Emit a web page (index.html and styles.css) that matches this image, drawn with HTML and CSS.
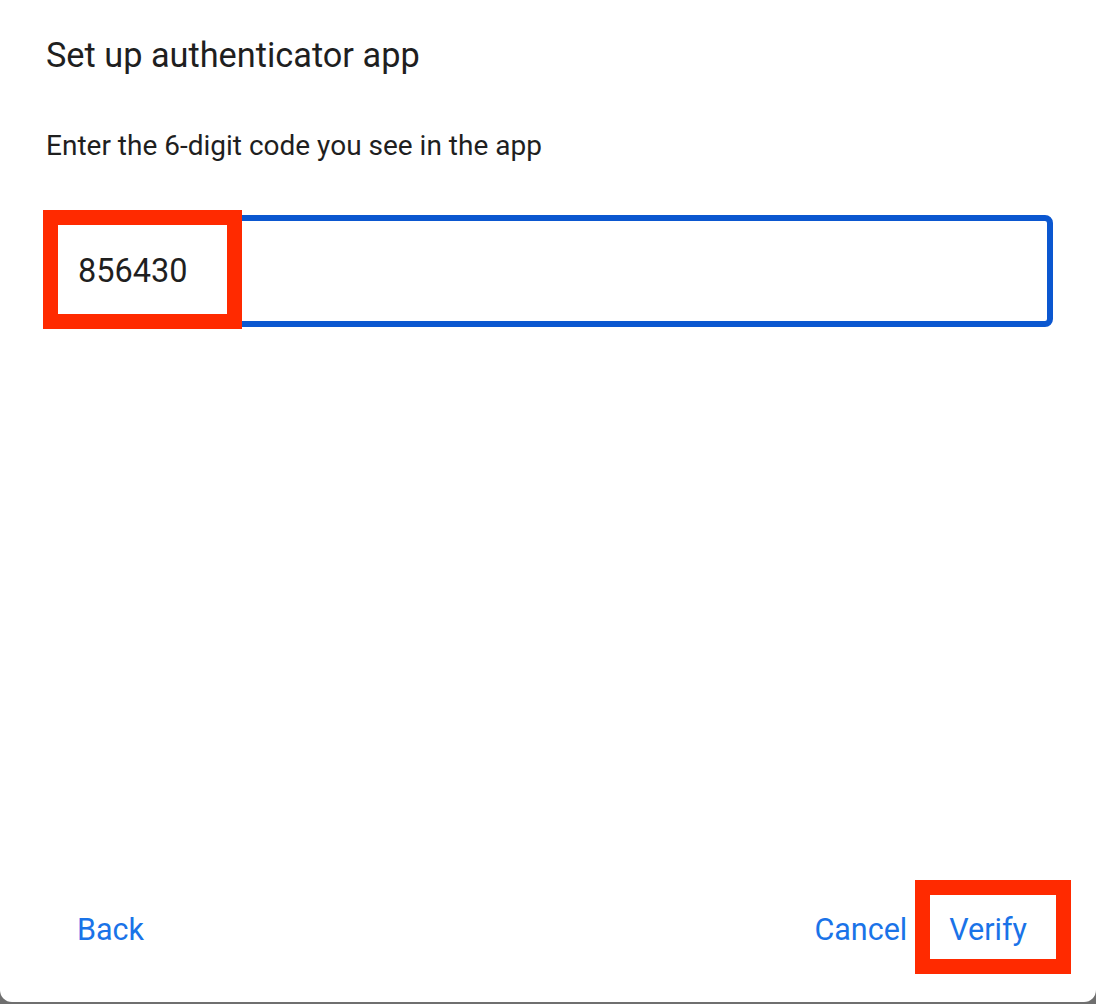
FILE: index.html
```html
<!DOCTYPE html>
<html lang="en">
<head>
<meta charset="utf-8">
<title>Set up authenticator app</title>
<link rel="stylesheet" href="styles.css">
</head>
<body>
<div class="dialog">
  <h1 class="title">Set up authenticator app</h1>
  <p class="subtitle">Enter the 6-digit code you see in the app</p>
  <div class="field">
    <div class="input">856430</div>
    <div class="mark mark-input"></div>
  </div>
  <div class="spacer"></div>
  <div class="footer">
    <button class="btn btn-back">Back</button>
    <div class="right">
      <button class="btn btn-cancel">Cancel</button>
      <div class="verify-wrap">
        <button class="btn btn-verify">Verify</button>
        <div class="mark mark-verify"></div>
      </div>
    </div>
  </div>
</div>
</body>
</html>
```
FILE: styles.css
```css
html, body {
  margin: 0;
  padding: 0;
  background: #6f6f6f;
  height: 1004px;
  overflow: hidden;
}
.dialog {
  box-sizing: border-box;
  width: 1096px;
  height: 1002px;
  background: #ffffff;
  border-radius: 0 0 12px 12px;
  display: flex;
  flex-direction: column;
  padding: 0 43px 0 46px;
  font-family: Roboto, "Open Sans", sans-serif;
  color: #1f1f1f;
}
.title {
  margin: 35px 0 0 0;
  font-size: 34.3px;
  font-weight: 400;
  line-height: 40px;
}
.subtitle {
  margin: 54px 0 0 0;
  font-size: 28px;
  font-weight: 400;
  line-height: 34px;
}
.field {
  position: relative;
  margin-top: 52px;
}
.input {
  box-sizing: border-box;
  height: 112px;
  border: 6px solid #0b57d0;
  border-radius: 8px;
  padding-left: 26px;
  display: flex;
  align-items: center;
  font-size: 32.5px;
  color: #1f1f1f;
}
.mark {
  position: absolute;
  box-sizing: border-box;
  border: 15px solid #ff2a00;
}
.mark-input {
  left: -3px;
  top: -5px;
  width: 199px;
  height: 119px;
}
.spacer {
  flex: 1;
}
.footer {
  display: flex;
  justify-content: space-between;
  align-items: center;
  margin-bottom: 52px;
  padding-left: 31px;
}
.right {
  display: flex;
  align-items: center;
}
.btn {
  background: none;
  border: none;
  font-family: Roboto, "Open Sans", sans-serif;
  font-size: 30.5px;
  color: #1a73e8;
  padding: 0;
  line-height: 40px;
  cursor: pointer;
}
.btn-cancel {
  margin-right: 42px;
}
.verify-wrap {
  position: relative;
  padding-right: 26px;
}
.mark-verify {
  left: -34px;
  top: -30px;
  width: 156px;
  height: 94px;
}
```
